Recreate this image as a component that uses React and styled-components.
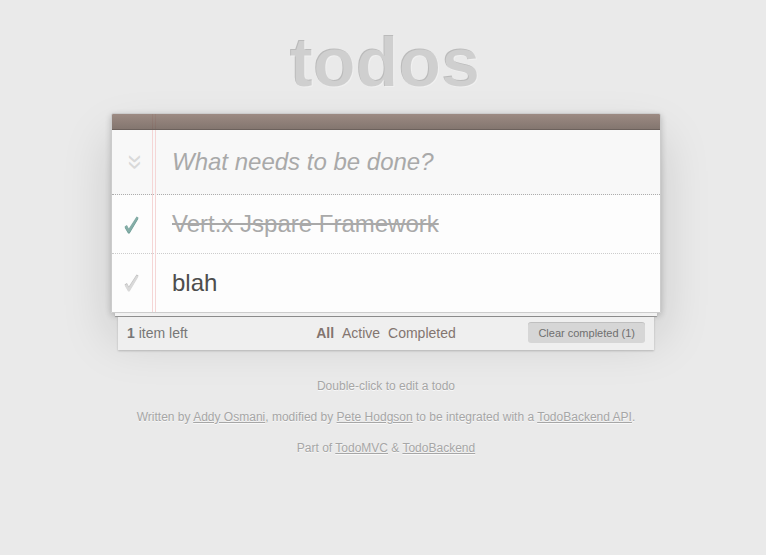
import React from "react";
import styled, { createGlobalStyle } from "styled-components";

const Global = createGlobalStyle`
  html, body { margin: 0; padding: 0; }
  body {
    background: #eaeaea;
    font: 14px "Liberation Sans", Arial, sans-serif;
    line-height: 19.6px;
    color: #4d4d4d;
  }
`;

const Page = styled.div`
  width: 100%;
`;

const Title = styled.h1`
  margin: 28px 0 15px;
  padding-left: 5px;
  height: 70px;
  font-size: 70px;
  line-height: 70px;
  font-weight: bold;
  text-align: center;
  color: rgba(255, 255, 255, 0.3);
  text-shadow: -1px -1px rgba(0, 0, 0, 0.2);
`;

const Column = styled.div`
  width: 550px;
  margin-left: calc(50% - 272px);
`;

const Card = styled.section`
  position: relative;
  background: rgba(255, 255, 255, 0.9);
  border: 1px solid #ccc;
  border-radius: 2px 2px 0 0;
  box-shadow: 0 2px 6px 0 rgba(0, 0, 0, 0.2), 0 25px 50px 0 rgba(0, 0, 0, 0.15);
  &::before {
    content: "";
    position: absolute;
    top: 0;
    bottom: 0;
    left: 40px;
    width: 2px;
    border-left: 1px solid #f5d6d6;
    border-right: 1px solid #f5d6d6;
  }
`;

const HeaderBar = styled.div`
  position: relative;
  z-index: 2;
  height: 15px;
  border-bottom: 1px solid #6c615c;
  background: linear-gradient(to bottom, rgba(132, 110, 100, 0.8), rgba(101, 84, 76, 0.8));
  border-radius: 1px 1px 0 0;
`;

const NewTodoRow = styled.div`
  display: flex;
  align-items: center;
  height: 64px;
  background: rgba(0, 0, 0, 0.02);
  border-bottom: 1px dotted #adadad;
`;

const ToggleAll = styled.div`
  width: 48px;
  display: flex;
  justify-content: center;
  align-items: center;
  color: #d9d9d9;
  font-size: 28px;
  span {
    display: inline-block;
    transform: rotate(90deg);
    line-height: 1;
  }
`;

const NewTodoInput = styled.input`
  flex: 1;
  height: 100%;
  border: none;
  outline: none;
  background: transparent;
  font: 24px "Liberation Sans", Arial, sans-serif;
  color: inherit;
  padding: 0 16px 0 12px;
  &::placeholder {
    font-style: italic;
    color: #a9a9a9;
  }
`;

const List = styled.ul`
  margin: 0;
  padding: 0;
  list-style: none;
`;

const Item = styled.li`
  display: flex;
  align-items: center;
  height: 58px;
  font-size: 24px;
  border-bottom: 1px dotted #ccc;
  &:last-child {
    border-bottom: none;
  }
`;

const Toggle = styled.span`
  width: 40px;
  display: flex;
  justify-content: center;
  align-items: center;
  svg {
    display: block;
    margin-right: 1px;
    fill: ${(p) => (p.$checked ? "#85ada7" : "#d9d9d9")};
    filter: ${(p) =>
      p.$checked ? "drop-shadow(0 1px 0 #669991)" : "drop-shadow(0 -1px 0 #bfbfbf)"};
  }
`;

const Label = styled.label`
  margin-left: 5px;
  padding: 0 60px 0 15px;
  line-height: 28.8px;
  white-space: pre;
  color: ${(p) => (p.$completed ? "#a9a9a9" : "#4d4d4d")};
  text-decoration: ${(p) => (p.$completed ? "line-through" : "none")};
`;

const PaperEdge = styled.div`
  position: relative;
  margin: 0 4px;
  height: 3px;
  background: rgba(255, 255, 255, 0.8);
  box-shadow: 0 1px 1px rgba(0, 0, 0, 0.3);
`;

const Footer = styled.footer`
  position: relative;
  margin: 1px 7px 0;
  height: 33px;
  padding: 0 9px;
  display: grid;
  grid-template-columns: 1fr auto 1fr;
  align-items: center;
  background: #efefef;
  color: #777;
  box-shadow: 0 1px 2px rgba(0, 0, 0, 0.2);
`;

const Count = styled.span`
  justify-self: start;
  strong {
    font-weight: bold;
  }
`;

const Filters = styled.ul`
  margin: 0;
  padding: 0;
  list-style: none;
  li {
    display: inline;
  }
`;

const FilterLink = styled.a`
  color: #83756f;
  margin: 2px;
  text-decoration: none;
  font-weight: ${(p) => (p.$selected ? "bold" : "normal")};
`;

const ClearButton = styled.button`
  justify-self: end;
  border: none;
  font: 11px "Liberation Sans", Arial, sans-serif;
  line-height: 20px;
  color: #6f6f6f;
  background: rgba(0, 0, 0, 0.1);
  padding: 0 10px;
  border-radius: 3px;
  box-shadow: 0 -1px 0 0 rgba(0, 0, 0, 0.2);
  position: relative;
  top: -1px;
`;

const Info = styled.footer`
  margin-top: 27px;
  color: #a6a6a6;
  font-size: 12px;
  text-align: center;
  text-shadow: 0 1px 0 rgba(255, 255, 255, 0.7);
  p {
    margin: 12px 0;
    line-height: 19px;
  }
  a {
    color: inherit;
  }
`;

const Check = () => (
  <svg width="15" height="17" viewBox="0 0 15 17" aria-hidden="true">
    <path d="M0.6 10.6 L2.9 9.1 L4.8 12.4 L12.6 0.4 L14.5 1.5 L5.6 16.4 L4.1 16.4 Z" />
  </svg>
);

const todos = [
  { title: "Vert.x Jspare Framework", completed: true },
  { title: "blah", completed: false },
];

export default function App() {
  return (
    <Page>
      <Global />
      <Title>todos</Title>
      <Column>
        <Card>
          <HeaderBar />
          <NewTodoRow>
            <ToggleAll>
              <span>»</span>
            </ToggleAll>
            <NewTodoInput placeholder="What needs to be done?" />
          </NewTodoRow>
          <List>
            {todos.map((t) => (
              <Item key={t.title}>
                <Toggle $checked={t.completed}>
                  <Check />
                </Toggle>
                <Label $completed={t.completed}>{t.title}</Label>
              </Item>
            ))}
          </List>
        </Card>
        <PaperEdge />
        <Footer>
          <Count>
            <strong>1</strong> item left
          </Count>
          <Filters>
            <li>
              <FilterLink href="#/" $selected>All</FilterLink>
            </li>{" "}
            <li>
              <FilterLink href="#/active">Active</FilterLink>
            </li>{" "}
            <li>
              <FilterLink href="#/completed">Completed</FilterLink>
            </li>
          </Filters>
          <ClearButton>Clear completed (1)</ClearButton>
        </Footer>
        <Info>
          <p>Double-click to edit a todo</p>
          <p>
            Written by <a href="#">Addy Osmani</a>, modified by <a href="#">Pete Hodgson</a> to be
            integrated with a <a href="#">TodoBackend API</a>.
          </p>
          <p>
            Part of <a href="#">TodoMVC</a> &amp; <a href="#">TodoBackend</a>
          </p>
        </Info>
      </Column>
    </Page>
  );
}
